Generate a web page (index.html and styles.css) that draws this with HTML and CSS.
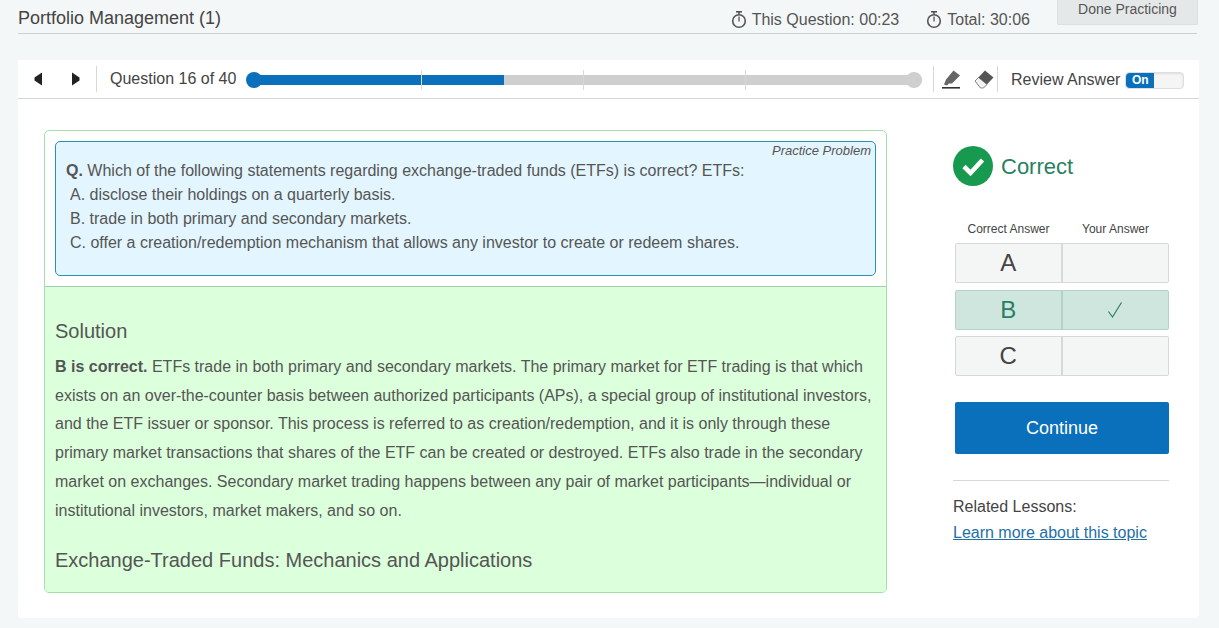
FILE: index.html
```html
<!DOCTYPE html>
<html lang="en">
<head>
    <meta charset="UTF-8" />
    <title>Portfolio Management (1)</title>
    <link rel="stylesheet" href="styles.css">
</head>
<body>

    <!-- Top header -->
    <div class="page">
        <div class="header">
            <div class="header-title">Portfolio Management (1)</div>
            <div class="timer timer-question">
                <svg class="stopwatch" width="16" height="18" viewBox="0 0 16 18"><rect x="5" y="0" width="6" height="1.6" fill="#555"/><rect x="7.2" y="1" width="1.6" height="2.5" fill="#555"/><circle cx="8" cy="10" r="6.3" fill="none" stroke="#555" stroke-width="1.6"/><rect x="7.4" y="5.5" width="1.3" height="5" fill="#555"/></svg>
                This Question: 00:23
            </div>
            <div class="timer timer-total">
                <svg class="stopwatch" width="16" height="18" viewBox="0 0 16 18"><rect x="5" y="0" width="6" height="1.6" fill="#555"/><rect x="7.2" y="1" width="1.6" height="2.5" fill="#555"/><circle cx="8" cy="10" r="6.3" fill="none" stroke="#555" stroke-width="1.6"/><rect x="7.4" y="5.5" width="1.3" height="5" fill="#555"/></svg>
                Total: 30:06
            </div>
            <div class="done-btn">Done Practicing</div>
        </div>

        <!-- Toolbar -->
        <div class="toolbar">
            <div class="nav-arrows">
                <svg width="10" height="14" viewBox="0 0 10 14"><path d="M9 0.5V13.5L1.5 8.5V5.5Z" fill="#222"/></svg>
                <svg width="10" height="14" viewBox="0 0 10 14"><path d="M1 0.5V13.5L8.5 8.5V5.5Z" fill="#222"/></svg>
            </div>
            <div class="question-count">Question 16 of 40</div>
            <div class="progress">
                <div class="progress-fill"></div>
                <div class="progress-tick tick-1"></div>
                <div class="progress-tick tick-2"></div>
                <div class="progress-tick tick-3"></div>
                <div class="progress-dot dot-start"></div>
                <div class="progress-dot dot-end"></div>
            </div>
            <div class="tools">
                <svg width="20" height="20" viewBox="0 0 20 20"><path d="M5 10.5L12.5 1.5L19 6.5L11 14.5H8L6 16.5L3 15.5Z" fill="#666"/><rect x="1" y="18" width="18" height="1.6" fill="#333"/></svg>
                <svg width="20" height="20" viewBox="0 0 20 20"><path d="M1 12L11 1.5L19.5 8.5L9.5 19H6.5Z" fill="#555"/><path d="M1 12L4.5 8.5L13 15.5L9.5 19H6.5Z" fill="#f2f2f2" stroke="#666" stroke-width="0.7"/></svg>
            </div>
            <div class="review">
                <span>Review Answer</span>
                <div class="toggle"><div class="toggle-on">On</div></div>
            </div>
        </div>

        <!-- Main -->
        <div class="main">
            <div class="card">
                <div class="card-top">
                    <div class="question-box">
                        <div class="practice-label">Practice Problem</div>
                        <p><strong>Q.</strong> Which of the following statements regarding exchange-traded funds (ETFs) is correct? ETFs:</p>
                        <p class="option">A. disclose their holdings on a quarterly basis.</p>
                        <p class="option">B. trade in both primary and secondary markets.</p>
                        <p class="option">C. offer a creation/redemption mechanism that allows any investor to create or redeem shares.</p>
                    </div>
                </div>
                <div class="solution">
                    <h3>Solution</h3>
                    <p><strong>B is correct.</strong> ETFs trade in both primary and secondary markets. The primary market for ETF trading is that which exists on an over-the-counter basis between authorized participants (APs), a special group of institutional investors, and the ETF issuer or sponsor. This process is referred to as creation/redemption, and it is only through these primary market transactions that shares of the ETF can be created or destroyed. ETFs also trade in the secondary market on exchanges. Secondary market trading happens between any pair of market participants—individual or institutional investors, market makers, and so on.</p>
                    <h3 class="reading">Exchange-Traded Funds: Mechanics and Applications</h3>
                </div>
            </div>

            <div class="side">
                <div class="result">
                    <svg width="40" height="40" viewBox="0 0 40 40"><circle cx="20" cy="20" r="20" fill="#179a50"/><path d="M11 20.5L17.5 27L29.5 14" fill="none" stroke="#fff" stroke-width="4.6"/></svg>
                    <span>Correct</span>
                </div>
                <div class="answer-heads">
                    <div>Correct Answer</div>
                    <div>Your Answer</div>
                </div>
                <div class="answer-row"><div>A</div><div></div></div>
                <div class="answer-row right">
                    <div>B</div>
                    <div class="tick"><svg width="16" height="18" viewBox="0 0 16 18"><path d="M1.5 10.5L5.5 16L14.5 1.5" fill="none" stroke="#2a7f62" stroke-width="1.2"/></svg></div>
                </div>
                <div class="answer-row"><div>C</div><div></div></div>
                <div class="continue">Continue</div>
                <div class="related">
                    <div>Related Lessons:</div>
                    <a href="#">Learn more about this topic</a>
                </div>
            </div>
        </div>
    </div>

</body>
</html>
```

FILE: styles.css
```css
* {
    margin: 0;
    padding: 0;
    box-sizing: border-box;
}

html, body {
    height: 100%;
    font-family: "Liberation Sans", Arial, sans-serif;
    background: #f4f7f7;
    color: #444;
    overflow: hidden;
}

.page {
    width: 1181px;
    margin-left: 18px;
}

.header {
    display: flex;
    height: 34px;
    border-bottom: 1px solid #ccd0d0;
    width: 1179px;
}

.header-title {
    font-size: 18px;
    padding-top: 8px;
    color: #444;
    flex: 1;
}

.timer {
    display: flex;
    align-items: flex-start;
    gap: 6px;
    font-size: 16px;
    padding-top: 11px;
    color: #555;
}

.stopwatch {
    margin: 0 -1px 0 -1px;
}

.timer-total {
    margin-left: 28px;
}

.done-btn {
    width: 141px;
    height: 25px;
    margin-left: 27px;
    margin-right: -1px;
    background: #e5e8e8;
    border: 1px solid #dcdfdf;
    border-top: none;
    border-radius: 0 0 2px 2px;
    text-align: center;
    font-size: 14px;
    line-height: 18px;
    color: #555;
}

.toolbar {
    display: flex;
    align-items: center;
    height: 39px;
    margin-top: 26px;
    background: #fff;
    border-bottom: 1px solid #d4d6d6;
}

.nav-arrows {
    display: flex;
    align-items: center;
    gap: 28px;
    height: 26px;
    width: 79px;
    padding-left: 15px;
    border-right: 1px solid #d8d8d8;
}

.question-count {
    font-size: 16px;
    margin-left: 13px;
    width: 137px;
    color: #444;
}

.progress {
    position: relative;
    width: 675px;
    height: 10px;
    margin-top: 2px;
    background: #cfcfcf;
    border-radius: 5px;
    margin-right: 11px;
}

.progress-fill {
    width: 257px;
    height: 10px;
    background: #0a70bb;
    border-radius: 5px 0 0 5px;
}

.progress-tick {
    position: absolute;
    top: -5px;
    width: 1px;
    height: 20px;
    background: #d8d8d8;
}

.tick-1 { left: 174px; }
.tick-2 { left: 336px; }
.tick-3 { left: 498px; }

.progress-dot {
    position: absolute;
    top: -3px;
    width: 16px;
    height: 16px;
    border-radius: 50%;
}

.dot-start {
    left: -1px;
    background: #0a70bb;
}

.dot-end {
    right: 0;
    background: #cfcfcf;
}

.tools {
    display: flex;
    align-items: center;
    gap: 13px;
    height: 26px;
    width: 65px;
    padding-left: 7px;
    border-left: 1px solid #d8d8d8;
    border-right: 1px solid #d8d8d8;
}

.review {
    display: flex;
    align-items: center;
    gap: 5px;
    font-size: 16px;
    margin: 2px 0 0 13px;
    color: #444;
}

.toggle {
    width: 59px;
    height: 17px;
    background: #f5f5f5;
    border: 1px solid #dedede;
    border-radius: 4px;
    box-shadow: inset 0 1px 2px #ddd;
}

.toggle-on {
    width: 28px;
    height: 15px;
    background: #0a70bb;
    border-radius: 4px 0 0 4px;
    color: #fff;
    font-size: 12px;
    font-weight: bold;
    text-align: center;
    line-height: 15px;
}

.main {
    display: flex;
    width: 1181px;
    height: 519px;
    background: #fff;
    padding: 31px 0 0 26px;
    border-radius: 0 0 4px 4px;
}

.card {
    width: 843px;
    height: 463px;
    border: 1px solid #a5dfae;
    border-radius: 5px;
    overflow: hidden;
}

.card-top {
    height: 156px;
    padding: 10px;
    border-bottom: 1px solid #9fd0b0;
}

.question-box {
    position: relative;
    height: 135px;
    background: #e3f5fe;
    border: 1px solid #2a92ad;
    border-radius: 5px;
    padding: 17px 10px 0;
    font-size: 16px;
    line-height: 24px;
    color: #555;
}

.practice-label {
    position: absolute;
    top: 0;
    right: 4px;
    font-size: 13px;
    line-height: 17px;
    font-style: italic;
}

.option {
    padding-left: 4px;
}

.solution {
    height: 305px;
    background: #dcffdc;
    padding: 31px 10px 0;
    color: #555;
}

.solution h3 {
    font-size: 20px;
    font-weight: normal;
    line-height: 26px;
}

.solution p {
    font-size: 16px;
    line-height: 28.7px;
    margin-top: 9px;
}

.solution .reading {
    margin-top: 22px;
}

.side {
    width: 214px;
    margin-left: 68px;
}

.result {
    display: flex;
    align-items: center;
    gap: 8px;
    height: 40px;
    margin: 16px 0 0 -2px;
    font-size: 22px;
    line-height: 40px;
    color: #2a7f62;
}

.result span {
    margin-top: 2px;
}

.answer-heads {
    display: flex;
    margin-top: 36px;
    font-size: 12px;
    line-height: 14px;
    color: #444;
    text-align: center;
}

.answer-heads div {
    width: 107px;
}

.answer-row {
    display: flex;
    height: 40px;
    margin-top: 6.5px;
    background: #f4f5f5;
    border: 1px solid #d8d8d8;
    border-radius: 2px;
    font-size: 24px;
    line-height: 38px;
    text-align: center;
    color: #444;
}

.answer-heads + .answer-row {
    margin-top: 7px;
}

.answer-row div {
    width: 106px;
}

.answer-row div:first-child {
    width: 107px;
    border-right: 2px solid #d8d8d8;
}

.answer-row.right {
    background: #cfe6df;
    border-color: #b5d2c9;
    color: #2a7f62;
}

.answer-row.right div:first-child {
    border-right-color: #b5d2c9;
}

.tick {
    display: flex;
    align-items: center;
    justify-content: center;
}

.continue {
    height: 52px;
    margin-top: 26px;
    background: #0a70bb;
    border-radius: 2px;
    color: #fff;
    font-size: 18px;
    line-height: 52px;
    text-align: center;
}

.related {
    margin: 26px 0 0 -2px;
    padding-top: 13px;
    border-top: 1px solid #d8d8d8;
    font-size: 16px;
    line-height: 26px;
    color: #444;
}

.related a {
    color: #1f6fa8;
}
```
